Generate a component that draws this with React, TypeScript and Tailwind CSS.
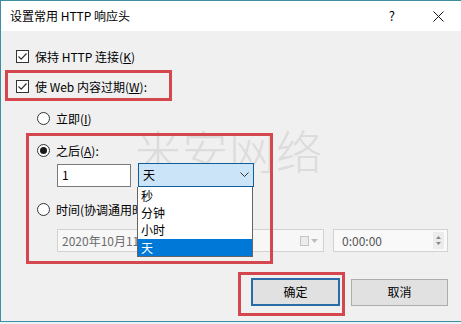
import React from "react";

const font = { fontFamily: '"Noto Sans CJK SC", "Liberation Sans", sans-serif' };

function Check({ label }: { label: React.ReactNode }) {
  return (
    <div className="flex h-[17px] items-center pl-[15px]">
      <div className="flex h-[13px] w-[13px] items-center justify-center border border-[#333] bg-white">
        <svg width="11" height="11" viewBox="0 0 11 11">
          <path d="M1.5 5.5 L4.2 8.2 L9.5 2.5" fill="none" stroke="#333" strokeWidth="1.2" />
        </svg>
      </div>
      <span className="ml-[6px] whitespace-nowrap">{label}</span>
    </div>
  );
}

function Radio({ label, on }: { label: React.ReactNode; on?: boolean }) {
  return (
    <div className="flex h-[17px] items-center pl-[36px]">
      <div className="flex h-[13px] w-[13px] items-center justify-center rounded-full border border-[#333] bg-white">
        {on && <div className="h-[7px] w-[7px] rounded-full bg-[#1a1a1a]" />}
      </div>
      <span className="ml-[6px] whitespace-nowrap">{label}</span>
    </div>
  );
}

export default function App() {
  return (
    <div className="relative h-[324px] w-[461px] overflow-hidden bg-[#eaf1f8] text-[12px] text-black" style={font}>
      <div className="flex h-[322px] flex-col border-l border-t border-b border-[#3d8ea3]">
        {/* title bar */}
        <div className="flex h-[30px] shrink-0 items-center bg-white pl-[9px]">
          <span className="whitespace-nowrap">设置常用 HTTP 响应头</span>
          <span className="ml-auto text-[13px]">?</span>
          <svg className="ml-[38px] mr-[17px]" width="11" height="11" viewBox="0 0 11 11">
            <path d="M0.5 0.5 L10.5 10.5 M10.5 0.5 L0.5 10.5" stroke="#111" strokeWidth="1" />
          </svg>
        </div>

        {/* body */}
        <div className="flex flex-1 flex-col bg-[#f0f0f0]">
          <div className="mt-[17px]">
            <Check label={<>保持 HTTP 连接(<u>K</u>)</>} />
          </div>
          <div className="mt-[13px]">
            <Check label={<>使 Web 内容过期(<u>W</u>):</>} />
          </div>
          <div className="mt-[15px]">
            <Radio label={<>立即(<u>I</u>)</>} />
          </div>
          <div className="mt-[15px]">
            <Radio on label={<>之后(<u>A</u>):</>} />
          </div>

          <div className="mt-[4px] flex h-[24px] items-center pl-[56px]">
            <div className="flex h-[23px] w-[74px] items-center border border-[#7a7a7a] bg-white pl-[4px]">1</div>
            <div className="relative z-10 ml-[7px] flex h-[24px] w-[116px] items-center border border-[#0f5e9c] bg-[#cce4f7] pl-[4px]">
              <span>天</span>
              <svg className="ml-auto mr-[4px]" width="9" height="6" viewBox="0 0 9 6">
                <path d="M0.5 0.5 L4.5 4.5 L8.5 0.5" fill="none" stroke="#333" strokeWidth="1" />
              </svg>
            </div>
          </div>

          <div className="mt-[14px]">
            <Radio label="时间(协调通用时间)" />
          </div>

          <div className="mt-[11px] flex h-[23px] items-center pl-[56px]">
            <div className="flex h-[23px] w-[267px] items-center border border-[#d2d2d2] bg-[#f7f7f7] pl-[4px] text-[#6d6d6d]">
              <span>2020年10月11日</span>
              <div className="ml-auto mr-[5px] flex items-center gap-[2px]">
                <div className="h-[10px] w-[9px] border border-[#c4c4c4] bg-[#ececec]" />
                <svg width="7" height="4" viewBox="0 0 7 4">
                  <path d="M0 0 L7 0 L3.5 4 Z" fill="#bdbdbd" />
                </svg>
              </div>
            </div>
            <div className="ml-[9px] flex h-[23px] w-[115px] items-center border border-[#d2d2d2] bg-[#f9f9f9] pl-[8px] text-[#555]">
              <span>0:00:00</span>
              <div className="ml-auto mr-[3px] flex h-[17px] w-[11px] flex-col items-center justify-center gap-[3px] bg-[#ececec]">
                <svg width="5" height="3" viewBox="0 0 5 3"><path d="M0 3 L2.5 0 L5 3 Z" fill="#888" /></svg>
                <svg width="5" height="3" viewBox="0 0 5 3"><path d="M0 0 L2.5 3 L5 0 Z" fill="#888" /></svg>
              </div>
            </div>
          </div>

          <div className="mt-[26px] flex h-[28px] items-center pl-[250px]">
            <button className="flex h-[28px] w-[89px] items-center justify-center border-2 border-[#2a6ca8] bg-[#e1e1e1]">
              确定
            </button>
            <button className="ml-[11px] flex h-[27px] w-[97px] items-center justify-center border border-[#adadad] bg-[#e1e1e1]">
              取消
            </button>
          </div>
        </div>
      </div>

      {/* watermark */}
      <div className="pointer-events-none absolute left-[135px] top-[126px] whitespace-nowrap text-[46px] font-light leading-none tracking-[1px] text-[#dcdcdc]">
        米安网络
      </div>

      {/* open dropdown list */}
      <div className="absolute z-20 left-[137px] top-[187px] flex w-[116px] flex-col border-x border-b border-[#646464] bg-white">
        <div className="flex h-[17px] items-center pl-[3px]">秒</div>
        <div className="flex h-[17px] items-center pl-[3px]">分钟</div>
        <div className="flex h-[18px] items-center pl-[3px]">小时</div>
        <div className="flex h-[17px] items-center bg-[#0078d7] pl-[3px] text-white">天</div>
      </div>

      {/* red annotation boxes */}
      <div className="pointer-events-none absolute z-30 left-[5px] top-[70px] h-[31px] w-[167px] border-[3px] border-[#d4474f]" />
      <div className="pointer-events-none absolute z-30 left-[26px] top-[133px] h-[131px] w-[247px] border-[3px] border-[#d4474f]" />
      <div className="pointer-events-none absolute z-30 left-[238px] top-[272px] h-[44px] w-[107px] border-[3px] border-[#d4474f]" />
    </div>
  );
}
